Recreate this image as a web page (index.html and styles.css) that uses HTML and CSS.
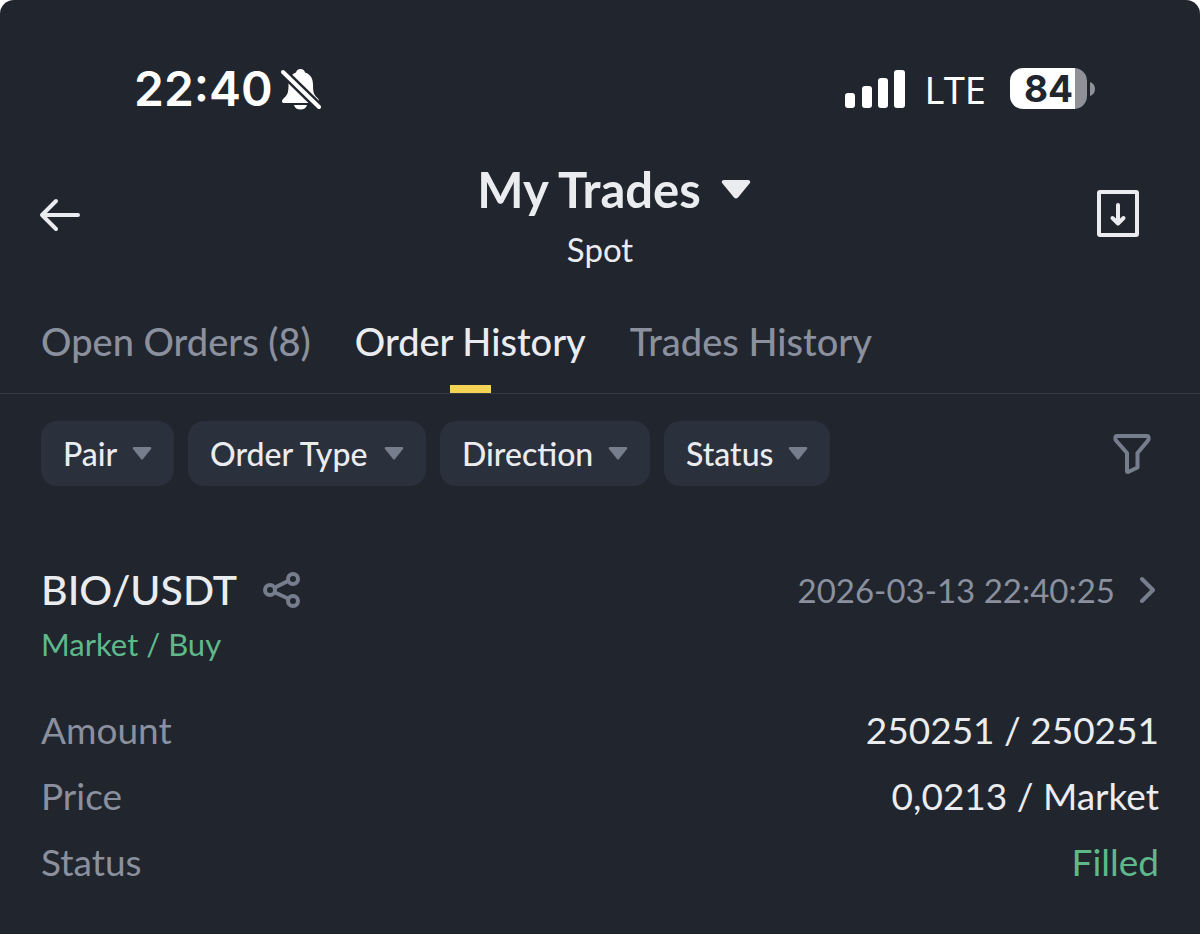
FILE: index.html
```html
<!DOCTYPE html>
<html lang="en">
<head>
    <meta charset="UTF-8">
    <meta name="viewport" content="width=device-width, initial-scale=1.0">
    <title>My Trades</title>
    <link rel="stylesheet" href="styles.css">
</head>
<body>
    <div class="screen">
        <div class="status-bar">
            <div class="status-left">
                <span class="clock">22:40</span>
                <svg class="bell" width="40" height="42" viewBox="0 0 40 42" aria-hidden="true">
                    <path fill="#fff" d="M19.500 1c-2.500 0-4 1.500-4.500 3.500C9.500 6.500 7.500 11 7.500 17c0 8-1 10-5 13.500C0 33 1 35 3 35h33c2 0 3-2 1-4.500-4-3.500-5-5.500-5-13.500 0-6-2-10.500-8-12.500C23.500 2.500 22 1 19.500 1zM13 37h13c-.8 3-3.200 4.500-6.500 4.500S13.800 40 13 37z"/>
                    <path class="slash-gap" d="M2 4l36 35"/>
                    <path class="slash" d="M2 4l36 35"/>
                </svg>
            </div>
            <div class="status-right">
                <svg class="signal" width="60" height="38" viewBox="0 0 60 38" aria-hidden="true">
                    <g fill="#fff">
                        <rect x="0" y="23" width="10" height="15" rx="3"/>
                        <rect x="17" y="16" width="10" height="22" rx="3"/>
                        <rect x="33" y="8" width="10" height="30" rx="3"/>
                        <rect x="49" y="0" width="11" height="38" rx="3"/>
                    </g>
                </svg>
                <span class="network">LTE</span>
                <div class="battery">
                    <span class="battery-level">84</span>
                    <svg width="5" height="14" viewBox="0 0 5 14" aria-hidden="true"><path fill="#8f9197" d="M0 0c3 1 5 3.500 5 7s-2 6-5 7z"/></svg>
                </div>
            </div>
        </div>

        <header class="header">
            <button class="icon-btn" type="button" aria-label="Back">
                <svg width="42" height="34" viewBox="0 0 42 34"><path class="line-white" d="M39 17H3M17 3L3 17l14 14"/></svg>
            </button>
            <div class="header-title">
                <button class="title-btn" type="button">
                    <h1>My Trades</h1>
                    <svg width="30" height="20" viewBox="0 0 30 20" aria-hidden="true"><path fill="#eaecef" d="M3 1h24c2 0 3 2 1.500 3.500L17 18.500q-2 2-4 0L1.500 4.500C0 3 1 1 3 1z"/></svg>
                </button>
                <p class="subtitle">Spot</p>
            </div>
            <button class="icon-btn export-btn" type="button" aria-label="Export">
                <svg width="42" height="50" viewBox="0 0 42 50"><rect class="line-white" x="2" y="2" width="38" height="43" rx="1"/><path class="line-white" d="M21 15v18M15.500 28l5.500 5.500 5.500-5.500"/></svg>
            </button>
        </header>

        <nav class="tabs">
            <a class="tab" href="#open">Open Orders (8)</a>
            <a class="tab active" href="#orders" aria-current="page">Order History</a>
            <a class="tab" href="#trades">Trades History</a>
        </nav>

        <div class="filters">
            <div class="filter">
                <select aria-label="Pair"><option>Pair</option></select>
                <svg class="caret" width="20" height="13" viewBox="0 0 20 13" aria-hidden="true"><path d="M2 0h16q2 0 1 2l-8 10q-1 1-2 0L1 2Q0 0 2 0z"/></svg>
            </div>
            <div class="filter">
                <select aria-label="Order Type"><option>Order Type</option></select>
                <svg class="caret" width="20" height="13" viewBox="0 0 20 13" aria-hidden="true"><path d="M2 0h16q2 0 1 2l-8 10q-1 1-2 0L1 2Q0 0 2 0z"/></svg>
            </div>
            <div class="filter">
                <select aria-label="Direction"><option>Direction</option></select>
                <svg class="caret" width="20" height="13" viewBox="0 0 20 13" aria-hidden="true"><path d="M2 0h16q2 0 1 2l-8 10q-1 1-2 0L1 2Q0 0 2 0z"/></svg>
            </div>
            <div class="filter">
                <select aria-label="Status"><option>Status</option></select>
                <svg class="caret" width="20" height="13" viewBox="0 0 20 13" aria-hidden="true"><path d="M2 0h16q2 0 1 2l-8 10q-1 1-2 0L1 2Q0 0 2 0z"/></svg>
            </div>
            <button class="icon-btn filter-btn" type="button" aria-label="Filter">
                <svg width="38" height="42" viewBox="0 0 38 42"><path class="line-gray" d="M4 3h30c2 0 2 3 1 4.500L24.500 20v14.500L15 39q-1 0-1-1V20L3 7.500C2 6 2 3 4 3z"/></svg>
            </button>
        </div>

        <main class="order">
            <div class="order-head">
                <h2>BIO/USDT</h2>
                <button class="icon-btn" type="button" aria-label="Share">
                    <svg width="38" height="38" viewBox="0 0 38 38"><g class="line-gray"><circle cx="7" cy="19" r="5"/><circle cx="30" cy="8" r="5"/><circle cx="30" cy="30" r="5"/><path d="M12 16.500l13-6.500M12 21.500l13 6"/></g></svg>
                </button>
                <a class="order-link" href="#details">
                    <time datetime="2026-03-13T22:40:25">2026-03-13 22:40:25</time>
                    <svg width="16" height="28" viewBox="0 0 16 28" aria-hidden="true"><path class="line-gray" d="M3 3l11 11L3 25"/></svg>
                </a>
            </div>
            <p class="order-side">Market / Buy</p>
            <dl class="details">
                <div class="row"><dt>Amount</dt><dd>250251 / 250251</dd></div>
                <div class="row"><dt>Price</dt><dd>0,0213 / Market</dd></div>
                <div class="row"><dt>Status</dt><dd class="green">Filled</dd></div>
            </dl>
        </main>
    </div>
</body>
</html>
```
FILE: styles.css
```css
* {
    box-sizing: border-box;
}

body {
    margin: 0;
    background: #fff;
    color: #eaecef;
    font-family: Lato, "Open Sans", sans-serif;
}

h1, h2, p, dl, dd {
    margin: 0;
}

svg {
    display: block;
    flex-shrink: 0;
}

button, select {
    font-family: inherit;
    color: inherit;
    background: none;
    border: 0;
    padding: 0;
    cursor: pointer;
}

a {
    color: inherit;
    text-decoration: none;
}

.screen {
    min-height: 100vh;
    background: #21252e;
    border-radius: 14px 14px 0 0;
    border-bottom: 4px solid #1c2028;
}

.line-white, .line-gray {
    fill: none;
    stroke: #eaecef;
    stroke-width: 4;
    stroke-linecap: round;
    stroke-linejoin: round;
}

.line-gray {
    stroke: #767d8c;
}

/* status bar */
.status-bar {
    display: flex;
    justify-content: space-between;
    align-items: center;
    height: 120px;
    padding: 57px 105px 0 134px;
    color: #fff;
}

.status-left, .status-right, .battery {
    display: flex;
    align-items: center;
}

.status-left {
    gap: 8px;
}

.clock {
    font: 600 48px/60px Inter, sans-serif;
}

.slash {
    stroke: #fff;
    stroke-width: 4;
    stroke-linecap: round;
}

.slash-gap {
    stroke: #21252e;
    stroke-width: 9;
}

.network {
    margin: 0 24px 0 20px;
    font: 400 38px/60px "Noto Sans", sans-serif;
}

.battery {
    gap: 3px;
}

.battery-level {
    width: 77px;
    border-radius: 13px;
    background: linear-gradient(90deg, #fff 84%, #8f9197 84%);
    color: #21252e;
    font: 700 37px/41px Inter, sans-serif;
    text-align: center;
}

/* header */
.header {
    display: grid;
    grid-template-columns: 1fr auto 1fr;
    align-items: center;
    margin-top: 30px;
    padding: 0 61px 0 39px;
}

.header-title {
    padding: 9px 0 1px 22px;
    text-align: center;
}

.title-btn {
    display: flex;
    align-items: center;
    gap: 20px;
    padding-left: 28px;
}

.title-btn h1 {
    font-size: 49px;
    font-weight: 700;
    line-height: 60px;
}

.subtitle {
    font-size: 33px;
    line-height: 60px;
}

.icon-btn {
    justify-self: start;
}

.export-btn {
    justify-self: end;
}

/* tabs */
.tabs {
    display: flex;
    gap: 44px;
    padding: 36px 41px 0;
    border-bottom: 1px solid #343a46;
}

.tab {
    padding-bottom: 27px;
    font-size: 38px;
    font-weight: 500;
    line-height: 50px;
    color: #8a909d;
}

.tab.active {
    position: relative;
    color: #eaecef;
}

.tab.active::after {
    content: "";
    position: absolute;
    left: 50%;
    bottom: 0;
    width: 41px;
    height: 8px;
    margin-left: -20px;
    background: #f5d355;
}

/* filters */
.filters {
    display: flex;
    align-items: center;
    gap: 14px;
    padding: 27px 49px 0 41px;
}

.filter {
    position: relative;
}

.filter select {
    appearance: none;
    height: 65px;
    padding: 0 56px 0 22px;
    border-radius: 16px;
    background: #2a303c;
    font-size: 32px;
    font-weight: 500;
}

.caret {
    position: absolute;
    right: 22px;
    top: 26px;
    fill: #767d8c;
    pointer-events: none;
}

.filter-btn {
    margin-left: auto;
}

/* order card */
.order {
    padding: 77px 41px 38px;
}

.order-head {
    display: flex;
    align-items: center;
    gap: 26px;
}

.order-head h2 {
    font-size: 41px;
    font-weight: 500;
    line-height: 54px;
}

.order-link {
    display: flex;
    align-items: center;
    gap: 24px;
    margin-left: auto;
    padding-right: 4px;
    font-size: 33px;
    color: #8a909d;
}

.order-side {
    font-size: 31px;
    line-height: 54px;
    color: #5fb88a;
}

.details {
    margin-top: 26px;
}

.row {
    display: flex;
    justify-content: space-between;
    font-size: 37px;
    line-height: 66px;
}

.row dt {
    color: #8a909d;
}

.row .green {
    color: #5fb88a;
}
```
